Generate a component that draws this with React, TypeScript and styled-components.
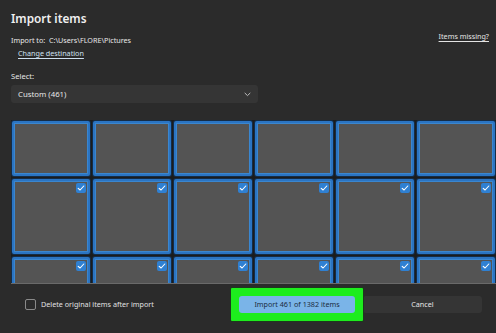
import styled, { createGlobalStyle } from 'styled-components'

const GlobalStyle = createGlobalStyle`
  html, body {
    margin: 0;
    padding: 0;
    background: #2b2b2b;
    overflow: hidden;
  }
  body {
    font-family: "Noto Sans", "Open Sans", sans-serif;
    color: #e6e6e6;
  }
`

const rows = [
  { height: 55, checked: false },
  { height: 75, checked: true },
  { height: 75, checked: true },
]

function CheckIcon() {
  return (
    <svg width="8" height="8" viewBox="0 0 8 8" fill="none">
      <path d="M1.2 4.3 L3.1 6 L6.8 2" stroke="#ffffff" strokeWidth="1.1" strokeLinecap="round" strokeLinejoin="round" />
    </svg>
  )
}

function ChevronDown() {
  return (
    <svg width="7" height="5" viewBox="0 0 7 5" fill="none">
      <path d="M1 1.2 L3.5 3.6 L6 1.2" stroke="#bdbdbd" strokeWidth="1" strokeLinecap="round" strokeLinejoin="round" />
    </svg>
  )
}

function App() {
  return (
    <Dialog>
      <GlobalStyle />
      <Header>
        <Title>Import items</Title>
        <InfoRow>
          <div>
            <ImportTo>Import to:&nbsp;&nbsp;C:\Users\FLORE\Pictures</ImportTo>
            <Link $indent>Change destination</Link>
          </div>
          <MissingLink>Items missing?</MissingLink>
        </InfoRow>
        <SelectLabel>Select:</SelectLabel>
        <Dropdown>
          <span>Custom (461)</span>
          <ChevronDown />
        </Dropdown>
      </Header>

      <Gallery>
        {rows.map((row, r) => (
          <Row key={r}>
            {Array.from({ length: 6 }).map((_, c) => (
              <Tile key={c} style={{ height: row.height }}>
                {row.checked && (
                  <Check>
                    <CheckIcon />
                  </Check>
                )}
              </Tile>
            ))}
          </Row>
        ))}
      </Gallery>

      <Footer>
        <CheckLabel>
          <CheckBox />
          Delete original items after import
        </CheckLabel>
        <Buttons>
          <Highlight>
            <PrimaryButton>Import 461 of 1382 items</PrimaryButton>
          </Highlight>
          <SecondaryButton>Cancel</SecondaryButton>
        </Buttons>
      </Footer>
    </Dialog>
  )
}

const Dialog = styled.div`
  width: 496px;
  height: 333px;
  display: flex;
  flex-direction: column;
  background: #2b2b2b;
  overflow: hidden;
`

const Header = styled.div`
  padding: 8px 7px 0 11px;
`

const Title = styled.h1`
  margin: 0;
  font-size: 11.8px;
  line-height: 20px;
  font-weight: 600;
  color: #f0f0f0;
`

const InfoRow = styled.div`
  display: flex;
  justify-content: space-between;
  align-items: flex-start;
  margin-top: 6px;
`

const ImportTo = styled.div`
  font-size: 7.2px;
  line-height: 12px;
  color: #e8e8e8;
`

const Link = styled.div<{ $indent?: boolean }>`
  margin-top: 1px;
  padding-left: ${({ $indent }) => ($indent ? '7px' : '0')};
  font-size: 7.2px;
  line-height: 12px;
  color: #cfe0f0;
  text-decoration: underline;
  text-underline-offset: 2px;
`

const MissingLink = styled(Link)`
  margin-top: -4px;
  color: #e4e4e4;
`

const SelectLabel = styled.div`
  margin-top: 11px;
  font-size: 7.6px;
  line-height: 12px;
  color: #e6e6e6;
`

const Dropdown = styled.div`
  margin-top: 3px;
  width: 247px;
  height: 18px;
  box-sizing: border-box;
  padding: 0 7px;
  display: flex;
  align-items: center;
  justify-content: space-between;
  background: #353535;
  border-radius: 3px;
  font-size: 7.8px;
  color: #e6e6e6;
`

const Gallery = styled.div`
  margin: 17px 0 0 11px;
  height: 164px;
  padding-top: 1px;
  overflow: hidden;
  display: flex;
  flex-direction: column;
  gap: 3px;
  background: #1c1c1c;
  border-bottom: 1px solid #6a6a6a;
  box-sizing: border-box;
`

const Row = styled.div`
  display: flex;
  gap: 3px;
  padding-left: 1px;
  flex-shrink: 0;
`

const Tile = styled.div`
  position: relative;
  width: 78px;
  flex-shrink: 0;
  box-sizing: border-box;
  background: #545454;
  border: 2px solid #2b74c2;
  border-radius: 2px;
  box-shadow: 0 0 0 1px #142c46, inset 0 0 0 1px #3a86cf;
`

const Check = styled.div`
  position: absolute;
  top: 2px;
  right: 2px;
  width: 10px;
  height: 10px;
  border-radius: 2px;
  background: #2f80d2;
  display: flex;
  align-items: center;
  justify-content: center;
`

const Footer = styled.div`
  height: 40px;
  display: flex;
  align-items: center;
  padding: 0 14px 0 25px;
`

const CheckLabel = styled.label`
  display: flex;
  align-items: center;
  gap: 5px;
  font-size: 7.2px;
  color: #e0e0e0;
`

const CheckBox = styled.span`
  width: 9px;
  height: 9px;
  border: 1px solid #8a8a8a;
  border-radius: 2px;
  background: #2b2b2b;
`

const Buttons = styled.div`
  margin-left: auto;
  display: flex;
  align-items: center;
`

const Highlight = styled.div`
  padding: 8px;
  background: #1ded1d;
  border-radius: 1px;
  box-shadow: 0 0 0 1px #1d3a1d;
  display: flex;
  position: relative;
  z-index: 1;
`

const BaseButton = styled.button`
  height: 17px;
  border: none;
  border-radius: 3px;
  font-family: inherit;
  font-size: 7.2px;
  padding: 0;
`

const PrimaryButton = styled(BaseButton)`
  width: 116px;
  background: #7ab4e8;
  color: #1b2c40;
`

const SecondaryButton = styled(BaseButton)`
  width: 119px;
  background: #353535;
  color: #e6e6e6;
`

export default App
